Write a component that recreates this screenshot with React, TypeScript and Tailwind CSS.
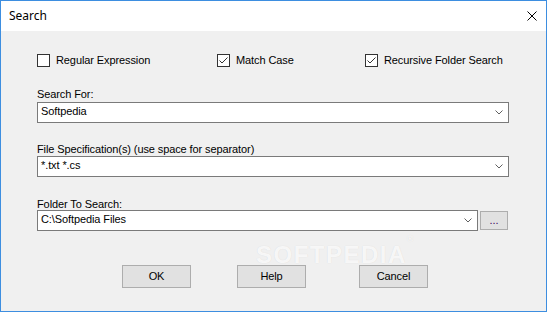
import React from 'react';

const Check = ({ checked, label }: { checked: boolean; label: string }) => (
  <div className="flex items-center h-[13px]">
    <div className="w-[13px] h-[13px] border border-[#333333] bg-white flex items-center justify-center shrink-0">
      {checked && (
        <svg width="11" height="11" viewBox="0 0 11 11">
          <polyline points="1.5,5.5 4,8 9.5,2.5" fill="none" stroke="#333333" strokeWidth="1" />
        </svg>
      )}
    </div>
    <span className="ml-[6px] leading-[13px] whitespace-nowrap">{label}</span>
  </div>
);

const Chevron = () => (
  <svg width="8" height="5" viewBox="0 0 8 5" className="shrink-0">
    <polyline points="0.5,0.5 4,4 7.5,0.5" fill="none" stroke="#606060" strokeWidth="1" />
  </svg>
);

const Combo = ({ value, width }: { value: string; width: string }) => (
  <div className={`h-[21px] ${width} border border-[#7a7a7a] bg-white flex items-center justify-between pl-[3px] pr-[5px] pb-[2px]`}>
    <span className="leading-[13px] whitespace-nowrap">{value}</span>
    <span className="pt-[2px]"><Chevron /></span>
  </div>
);

const Button = ({ label, className }: { label: string; className: string }) => (
  <button className={`h-[23px] w-[69px] bg-[#e1e1e1] border border-[#adadad] flex items-center justify-center leading-[13px] ${className}`}>
    {label}
  </button>
);

export default function App() {
  return (
    <div className="w-[547px] h-[312px] border border-[#3d8ee0] flex flex-col relative overflow-hidden text-[11px] tracking-[-0.1px] text-black font-['Liberation_Sans',Arial,sans-serif]">
      <div className="h-[30px] bg-white flex items-center justify-between pl-[8px] pr-[9px] shrink-0">
        <span className="text-[12px] tracking-normal font-['Noto_Sans',sans-serif] pb-[1px]">Search</span>
        <svg width="10" height="10" viewBox="0 0 10 10">
          <line x1="0.5" y1="0.5" x2="9.5" y2="9.5" stroke="#000" strokeWidth="1" />
          <line x1="9.5" y1="0.5" x2="0.5" y2="9.5" stroke="#000" strokeWidth="1" />
        </svg>
      </div>

      <div className="flex-1 bg-[#f0f0f0] pl-[36px] flex flex-col">
        <div className="mt-[23px] flex">
          <div className="w-[180px]"><Check checked={false} label="Regular Expression" /></div>
          <div className="w-[148px]"><Check checked label="Match Case" /></div>
          <Check checked label="Recursive Folder Search" />
        </div>

        <div className="mt-[21px] leading-[13px]">Search For:</div>
        <div className="mt-[1px]"><Combo value="Softpedia" width="w-[472px]" /></div>

        <div className="mt-[20px] leading-[13px]">File Specification(s) (use space for separator)</div>
        <div><Combo value="*.txt *.cs" width="w-[472px]" /></div>

        <div className="mt-[21px] leading-[13px]">Folder To Search:</div>
        <div className="mt-[-1px] flex items-start">
          <Combo value="C:\Softpedia Files" width="w-[441px]" />
          <button className="ml-[2px] mt-[1px] w-[28px] h-[19px] bg-[#e1e1e1] border border-[#adadad] flex items-center justify-center leading-[13px] text-[#3a0a5a]">
            ...
          </button>
        </div>

        <div className="mt-[34px] flex">
          <Button label="OK" className="ml-[85px]" />
          <Button label="Help" className="ml-[46px]" />
          <Button label="Cancel" className="ml-[53px]" />
        </div>
      </div>

      <div className="absolute left-[255px] top-[242px] text-[24px] font-bold tracking-[1.5px] text-white/80 leading-[24px] [text-shadow:0_0_1px_rgba(0,0,0,0.12)] pointer-events-none select-none">
        SOFTPEDIA<sup className="text-[9px] align-top">®</sup>
      </div>
    </div>
  );
}
